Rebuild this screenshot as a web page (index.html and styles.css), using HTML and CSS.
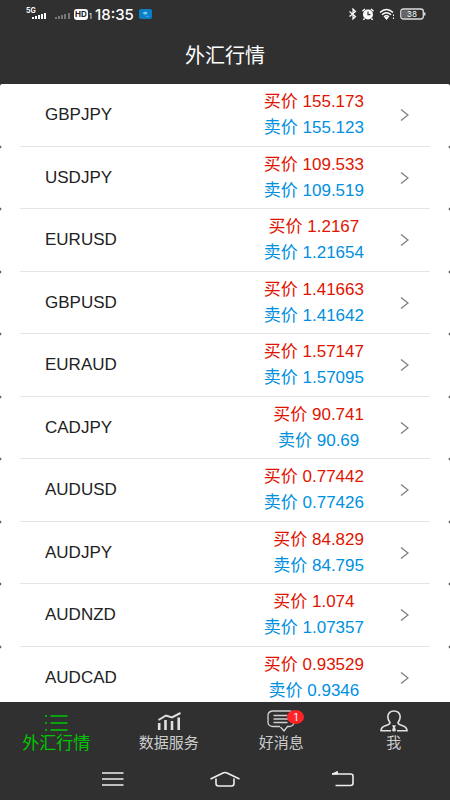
FILE: index.html
```html
<!DOCTYPE html>
<html lang="zh-CN">
<head>
    <meta charset="UTF-8">
    <meta name="viewport" content="width=device-width, initial-scale=1.0">
    <title>外汇行情</title>
    <link rel="stylesheet" href="styles.css">
</head>
<body>
    <div class="status-bar">
        <div class="status-left">
            <svg class="signal" width="22" height="14" viewBox="0 0 22 14">
                <text class="signal-text" x="0" y="6">5G</text>
                <path d="M7 10v2M10 9v3M13 8v4M16 7v5M19 6v6" stroke="#fff" stroke-width="2"/>
            </svg>
            <svg class="signal-dim" width="16" height="14" viewBox="0 0 16 14">
                <path d="M1 10v2M4 9v3M7 8v4M10 7v5M14 6v6" stroke="#777" stroke-width="2"/>
            </svg>
            <span class="hd">HD</span>
            <span class="sim">1</span>
            <span class="clock">18:35</span>
            <svg width="13" height="10" viewBox="0 0 13 10">
                <rect width="13" height="10" rx="2" fill="#087fc4"/>
                <path d="M3.500 4q3-3 5.500 0L6.500 6zM4.500 6.500q2 1.500 4.500 0l1 1.500" fill="#7cc4ea"/>
            </svg>
        </div>
        <div class="status-right">
            <svg width="8" height="12" viewBox="0 0 8 12" fill="none" stroke="#fff" stroke-width="1.200">
                <path d="M.5 3.500l6 5L4 11V1l2.500 2.500-6 5"/>
            </svg>
            <svg width="12" height="12" viewBox="0 0 12 12">
                <path d="M.5 3.200L3 1M11.500 3.200L9 1M2.500 10.500L1.500 12M9.500 10.500l1 1.500" stroke="#fff" stroke-width="1.500"/>
                <circle cx="6" cy="6.500" r="5" fill="#fff"/>
                <path d="M6 3.500v3.200h2.500" fill="none" stroke="#303030" stroke-width="1.200"/>
            </svg>
            <svg width="16" height="12" viewBox="0 0 16 12" fill="none" stroke="#fff" stroke-width="1.500">
                <path d="M1 4.500q6.500-6 13 0M3 6.800q4.500-4 9 0M5 8.800q2.500-2 5 0"/>
                <path d="M6 9.500h3l-1.500 2zM14.500 6.500v1.500M14.500 9.500v1.500" fill="#fff" stroke-width="1"/>
            </svg>
            <svg width="26" height="12" viewBox="0 0 26 12">
                <rect x=".8" y="1" width="22.500" height="10" rx="2.500" fill="none" stroke="#ddd" stroke-width="1.300"/>
                <rect x="2" y="2.200" width="8" height="7.600" rx="1" fill="#666"/>
                <path d="M24.700 4.500v3" stroke="#ddd" stroke-width="1.500"/>
                <text class="battery-text" x="12" y="9">38</text>
            </svg>
        </div>
    </div>

    <header class="header">
        <h1>外汇行情</h1>
    </header>

    <main class="list" id="list"></main>

    <nav class="tabs">
        <a class="tab active" href="#">
            <svg width="24" height="18" viewBox="0 0 24 18" stroke="#00c800" stroke-width="1.600">
                <path d="M1 2h2M6.500 2h17M1 9h2M6.500 9h17M1 16h2M6.500 16h17"/>
            </svg>
            <span>外汇行情</span>
        </a>
        <a class="tab" href="#">
            <svg width="24" height="20" viewBox="0 0 24 20" fill="none" stroke="#e0e0e0">
                <path d="M1.500 8L9 3.500l6 2L23.500 1" stroke-width="2"/>
                <path d="M2.200 11v7M8.500 8v10M15 9v9M21.700 5.500v12.500" stroke-width="2.600"/>
            </svg>
            <span>数据服务</span>
        </a>
        <a class="tab" href="#">
            <svg width="28" height="22" viewBox="0 0 28 22" fill="none" stroke="#d0d0d0" stroke-width="1.300">
                <path d="M13 16.500H5.500Q1 16 1 12V5.500Q1 1.500 5.500 1h17Q27 1.500 27 5.500V12q0 4-4.500 4.500h-2L17 21l-3.500-4"/>
                <path d="M6.500 5.500h14M6.500 9h15M6.500 12.500h14"/>
            </svg>
            <span class="badge">1</span>
            <span>好消息</span>
        </a>
        <a class="tab" href="#">
            <svg width="28" height="22" viewBox="0 0 28 22" fill="none" stroke="#e0e0e0" stroke-width="1.600">
                <path d="M11 20.800H1q0-4 5-5.300 4-1 4-2.700Q7.800 9.800 7.800 6.500 8.500 1 14 1t6.200 5.500q0 3.300-2.200 6.300 0 1.700 4 2.700 5 1.300 5 5.300H17"/>
                <path d="M12.500 15.500h3l-.7 2 1 3L14 21.500l-1.800-1 1-3z" fill="#e0e0e0" stroke-width=".5"/>
            </svg>
            <span>我</span>
        </a>
    </nav>

    <div class="system-nav">
        <button aria-label="Menu">
            <svg width="28" height="18" viewBox="0 0 28 18" stroke="#eee" stroke-width="1.600">
                <path d="M6 3h21.500M6 9h21.500M6 15h21.500"/>
            </svg>
        </button>
        <button aria-label="Home">
            <svg width="32" height="18" viewBox="0 0 32 18" fill="none" stroke="#eee" stroke-width="1.600">
                <path d="M1.500 9L14 3q2-1 4 0l12.500 6M7 8.500v5Q7 16 9.500 16h13q2.500 0 2.500-2.500v-5"/>
            </svg>
        </button>
        <button aria-label="Back">
            <svg width="28" height="18" viewBox="0 0 28 18" fill="none" stroke="#eee" stroke-width="1.600">
                <path d="M6 4h18.500Q27 4 27 6v7q0 2.500-2.500 2.500H9.500"/>
                <path d="M6 4l5.500-2.500V4z" fill="#eee" stroke-width="1"/>
            </svg>
        </button>
    </div>

    <script>
        const rates = [
            ['GBPJPY', '155.173', '155.123'],
            ['USDJPY', '109.533', '109.519'],
            ['EURUSD', '1.2167', '1.21654'],
            ['GBPUSD', '1.41663', '1.41642'],
            ['EURAUD', '1.57147', '1.57095'],
            ['CADJPY', '90.741', '90.69'],
            ['AUDUSD', '0.77442', '0.77426'],
            ['AUDJPY', '84.829', '84.795'],
            ['AUDNZD', '1.074', '1.07357'],
            ['AUDCAD', '0.93529', '0.9346']
        ];

        document.getElementById('list').innerHTML = rates.map(([name, buy, sell]) => `
            <a class="row" href="#">
                <div class="row-inner">
                    <span class="pair">${name}</span>
                    <span class="prices">
                        <span class="buy">买价 ${buy}</span>
                        <span class="sell">卖价 ${sell}</span>
                    </span>
                    <svg class="arrow" width="9" height="14" viewBox="0 0 9 14" fill="none" stroke="#808080" stroke-width="1.400">
                        <path d="M1 1.500L8 7l-7 5.500"/>
                    </svg>
                </div>
            </a>`).join('');
    </script>
</body>
</html>
```
FILE: styles.css
```css
* {
    box-sizing: border-box;
}
body {
    margin: 0;
    height: 100vh;
    display: flex;
    flex-direction: column;
    background-color: #303030;
    color: #fff;
    font-family: Inter, "Noto Sans CJK SC", sans-serif;
    font-size: 17px;
}
a {
    color: inherit;
    text-decoration: none;
}
svg {
    display: block;
}

/* Status bar */
.status-bar {
    height: 28px;
    padding: 0 24px 0 26px;
    display: flex;
    justify-content: space-between;
    align-items: center;
}
.status-left,
.status-right {
    display: flex;
    align-items: center;
}
.status-right {
    gap: 5px;
}
.signal-text {
    font-size: 7px;
    font-weight: 700;
    fill: #fff;
}
.signal-dim {
    margin: 0 3px 0 7px;
}
.hd {
    width: 14px;
    height: 11px;
    border-radius: 3px;
    background-color: #fff;
    color: #222;
    font-size: 8px;
    font-weight: 700;
    line-height: 11px;
    text-align: center;
}
.sim {
    width: 7px;
    padding: 6px 0 0 1px;
    font-size: 7px;
    line-height: 8px;
}
.clock {
    margin-right: 5px;
    font-size: 15px;
    font-weight: 500;
}
.battery-text {
    font-size: 8px;
    fill: #fff;
    text-anchor: middle;
}

/* Title */
.header {
    height: 56px;
    display: flex;
    justify-content: center;
    align-items: center;
}
.header h1 {
    margin: 0;
    font-size: 20px;
    font-weight: 400;
    line-height: 28px;
}

/* Rates */
.list {
    flex: 1;
    min-height: 0;
    overflow-y: auto;
    scrollbar-width: none;
    display: grid;
    grid-auto-rows: 63px 62px;
    background-color: #111;
    font-family: "Liberation Sans", "Noto Sans CJK SC", sans-serif;
}
.row {
    display: flex;
    padding: 0 20px;
    border-radius: 2px;
    background-color: #fff;
    color: #222;
}
.row-inner {
    flex: 1;
    display: flex;
    align-items: center;
    padding: 0 21px 0 25px;
    border-bottom: 1px solid #e4e4e4;
}
.pair {
    flex: 1;
}
.prices {
    text-align: center;
    line-height: 26px;
}
.buy,
.sell {
    display: block;
}
.buy {
    color: #e01400;
}
.sell {
    color: #0090e0;
}
.arrow {
    margin-left: 36px;
}

/* Bottom tabs */
.tabs {
    height: 56px;
    display: grid;
    grid-template-columns: repeat(4, 1fr);
}
.tab {
    position: relative;
    display: flex;
    flex-direction: column;
    align-items: center;
    justify-content: flex-end;
    padding-bottom: 4px;
    color: #ccc;
    font-size: 15px;
    line-height: 22px;
}
.tab.active {
    color: #00c800;
    font-size: 17px;
}
.badge {
    position: absolute;
    top: 8px;
    left: 50%;
    width: 17px;
    height: 14px;
    margin-left: 6px;
    border-radius: 50%;
    background-color: #ff2428;
    color: #fff;
    font-size: 10px;
    line-height: 14px;
    text-align: center;
}

/* System buttons */
.system-nav {
    height: 42px;
    display: flex;
    justify-content: center;
    align-items: center;
}
.system-nav button {
    width: 115px;
    padding: 0;
    border: none;
    background: none;
    display: flex;
    justify-content: center;
}
```
